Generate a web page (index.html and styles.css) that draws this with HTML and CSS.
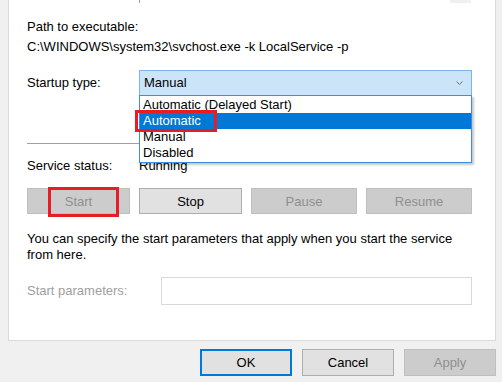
FILE: index.html
```html
<!DOCTYPE html>
<html lang="en">
<head>
  <meta charset="UTF-8">
  <title>Service Properties</title>
  <link rel="stylesheet" href="styles.css">
</head>
<body>
  <div class="panel">
    <div class="desc-tail"><span class="desc-scroll"></span></div>

    <div class="path-label">Path to executable:</div>
    <div class="path-value">C:\WINDOWS\system32\svchost.exe -k LocalService -p</div>

    <div class="row startup-row">
      <span class="label">Startup type:</span>
      <div class="combo">
        <span class="combo-value">Manual</span>
        <svg class="chevron" width="7" height="4" viewBox="0 0 7 4">
          <polyline points="0.5,0.5 3.5,3.5 6.5,0.5" fill="none" stroke="#6d6d6d" stroke-width="1"/>
        </svg>
        <ul class="combo-list">
          <li>Automatic (Delayed Start)</li>
          <li class="selected">Automatic<span class="mark mark-auto"></span></li>
          <li>Manual</li>
          <li>Disabled</li>
        </ul>
      </div>
    </div>

    <hr class="sep">

    <div class="row status-row">
      <span class="label">Service status:</span>
      <span>Running</span>
    </div>

    <div class="svc-buttons">
      <button class="btn" disabled>Start<span class="mark mark-start"></span></button>
      <button class="btn">Stop</button>
      <button class="btn" disabled>Pause</button>
      <button class="btn" disabled>Resume</button>
    </div>

    <p class="hint">You can specify the start parameters that apply when you start the service<br>from here.</p>

    <div class="row params-row">
      <span class="label muted">Start parameters:</span>
      <div class="param-input"></div>
    </div>
  </div>

  <div class="dialog-buttons">
    <button class="btn btn-default">OK</button>
    <button class="btn">Cancel</button>
    <button class="btn" disabled>Apply</button>
  </div>
</body>
</html>
```

FILE: styles.css
```css
body {
  margin: 0;
  background: #f0f0f0;
  font-family: "Liberation Sans", Arial, sans-serif;
  font-size: 13px;
  color: #000;
}

.panel {
  margin-left: 8px;
  width: 488px;
  box-sizing: border-box;
  background: #fff;
  border: 1px solid #dadada;
  border-top: none;
  padding: 0 23px 35px 18px;
}

/* bottom of the description box above, cut off by the screenshot */
.desc-tail {
  display: flex;
  margin-left: 112px;
  height: 3px;
  border-left: 1px solid #9a9a9a;
}
.desc-scroll {
  margin-left: auto;
  margin-right: 1px;
  width: 21px;
  background: #f0f0f0;
}

.path-label {
  margin-top: 14px;
  line-height: 20px;
}
.path-value {
  line-height: 20px;
}

.row {
  display: flex;
  align-items: center;
  line-height: 20px;
}
.label {
  flex: 0 0 112px;
}
.muted {
  color: #a0a0a0;
}

.startup-row {
  margin-top: 13px;
}
.combo {
  position: relative;
  flex: 1;
  height: 26px;
  box-sizing: border-box;
  display: flex;
  align-items: center;
  padding: 0 8px 0 4px;
  background: #cce4f7;
  border: 1px solid #7eb4ea;
}
.combo-value {
  flex: 1;
}
.chevron {
  display: block;
}

.combo-list {
  position: absolute;
  top: 24px;
  left: -1px;
  right: -1px;
  margin: 0;
  padding: 1px 0;
  list-style: none;
  background: #fff;
  border: 1px solid #3d8ee0;
  box-shadow: 2px 2px 2px rgba(0, 0, 0, 0.22);
  z-index: 2;
}
.combo-list li {
  position: relative;
  height: 16px;
  line-height: 16px;
  padding-left: 3px;
}
.combo-list li.selected {
  background: #0078d7;
  color: #fff;
}

.mark {
  position: absolute;
  box-sizing: border-box;
  border: 3px solid #e81c24;
}
.mark-auto {
  left: -5px;
  top: -3px;
  width: 82px;
  height: 22px;
}
.mark-start {
  left: 20px;
  top: -2px;
  width: 71px;
  height: 30px;
}

.sep {
  margin: 47px 0 0;
  border: none;
  border-top: 1px solid #a0a0a0;
}

.status-row {
  margin-top: 12px;
}

.svc-buttons {
  display: grid;
  grid-template-columns: 103px 103px 106px 1fr;
  gap: 9px;
  margin-top: 12px;
}

.btn {
  position: relative;
  height: 26px;
  padding: 0;
  font-family: inherit;
  font-size: 13px;
  color: #000;
  background: #e1e1e1;
  border: 1px solid #adadad;
}
.btn:disabled {
  color: #8f8f8f;
  background: #cccccc;
  border-color: #bfbfbf;
}

.hint {
  margin: 17px 0 0;
  line-height: 16px;
}

.params-row {
  margin-top: 14px;
}
.params-row .label {
  flex-basis: 134px;
}
.param-input {
  flex: 1;
  height: 28px;
  box-sizing: border-box;
  border: 1px solid #d9d9d9;
}

.dialog-buttons {
  display: flex;
  justify-content: flex-end;
  gap: 10px;
  margin-top: 8px;
  padding-right: 6px;
}
.dialog-buttons .btn {
  width: 92px;
  height: 27px;
}
.btn-default {
  border-color: #0078d7;
  box-shadow: inset 0 0 0 1px #0078d7;
}
```
